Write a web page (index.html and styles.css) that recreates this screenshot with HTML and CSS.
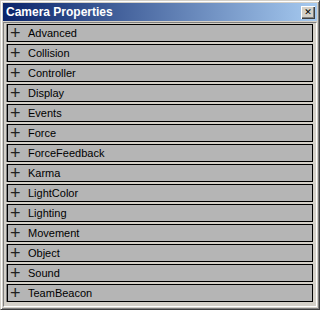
FILE: index.html
```html
<!DOCTYPE html>
<html>
<head>
    <title>Camera Properties</title>
    <link rel="stylesheet" href="styles.css">
</head>
<body>
    <div class="window">
        <div class="titlebar">
            <span class="title">Camera Properties</span>
            <button class="close-btn">&#x2715;</button>
        </div>
        <div class="panel">
            <div class="row"><span class="plus">+</span>Advanced</div>
            <div class="row"><span class="plus">+</span>Collision</div>
            <div class="row"><span class="plus">+</span>Controller</div>
            <div class="row"><span class="plus">+</span>Display</div>
            <div class="row"><span class="plus">+</span>Events</div>
            <div class="row"><span class="plus">+</span>Force</div>
            <div class="row"><span class="plus">+</span>ForceFeedback</div>
            <div class="row"><span class="plus">+</span>Karma</div>
            <div class="row"><span class="plus">+</span>LightColor</div>
            <div class="row"><span class="plus">+</span>Lighting</div>
            <div class="row"><span class="plus">+</span>Movement</div>
            <div class="row"><span class="plus">+</span>Object</div>
            <div class="row"><span class="plus">+</span>Sound</div>
            <div class="row"><span class="plus">+</span>TeamBeacon</div>
        </div>
    </div>
</body>
</html>
```

FILE: styles.css
```css
/* Classic property window */

body {
    margin: 0;
    padding: 0;
    background-color: #d4d0c8;
    font-family: "Liberation Sans", Arial, sans-serif;
}

.window {
    width: 320px;
    height: 310px;
    box-sizing: border-box;
    background-color: #d4d0c8;
    border-top: 1px solid #d4d0c8;
    border-left: 1px solid #d4d0c8;
    border-right: 1px solid #404040;
    border-bottom: 1px solid #404040;
    box-shadow: inset 1px 1px 0 #fff, inset -1px -1px 0 #808080;
    padding: 2px;
    display: flex;
    flex-direction: column;
}

.titlebar {
    height: 18px;
    display: flex;
    align-items: center;
    justify-content: space-between;
    padding: 0 2px 0 3px;
    background: linear-gradient(to right, #0a246a, #a6caf0);
}

.title {
    color: #fff;
    font-weight: bold;
    font-size: 12px;
    font-family: "Liberation Sans", Arial, sans-serif;
}

.close-btn {
    width: 14px;
    height: 13px;
    padding: 0;
    margin: 0;
    font-size: 9px;
    line-height: 9px;
    color: #000;
    background-color: #d4d0c8;
    border: none;
    box-shadow: inset 1px 1px 0 #fff, inset -1px -1px 0 #404040, inset -2px -2px 0 #808080;
    font-family: "DejaVu Sans", sans-serif;
}

.panel {
    flex: 1;
    margin-top: 1px;
    padding: 1px 1px 0 3px;
    display: flex;
    flex-direction: column;
    gap: 2px;
    border-left: 1px solid #808080;
    border-top: 1px solid #808080;
    border-right: 1px solid #fff;
    border-bottom: 1px solid #fff;
}

.row {
    height: 18px;
    box-sizing: border-box;
    margin-right: 2px;
    display: flex;
    align-items: center;
    background-color: #b5b5b5;
    border: 1px solid #000;
    box-shadow: -1px 0 0 #808080;
    font-size: 11px;
    color: #000;
}

.plus {
    width: 18px;
    padding-left: 2px;
    font-size: 18px;
    line-height: 14px;
    color: #202020;
    font-family: "Liberation Sans", Arial, sans-serif;
}
```
